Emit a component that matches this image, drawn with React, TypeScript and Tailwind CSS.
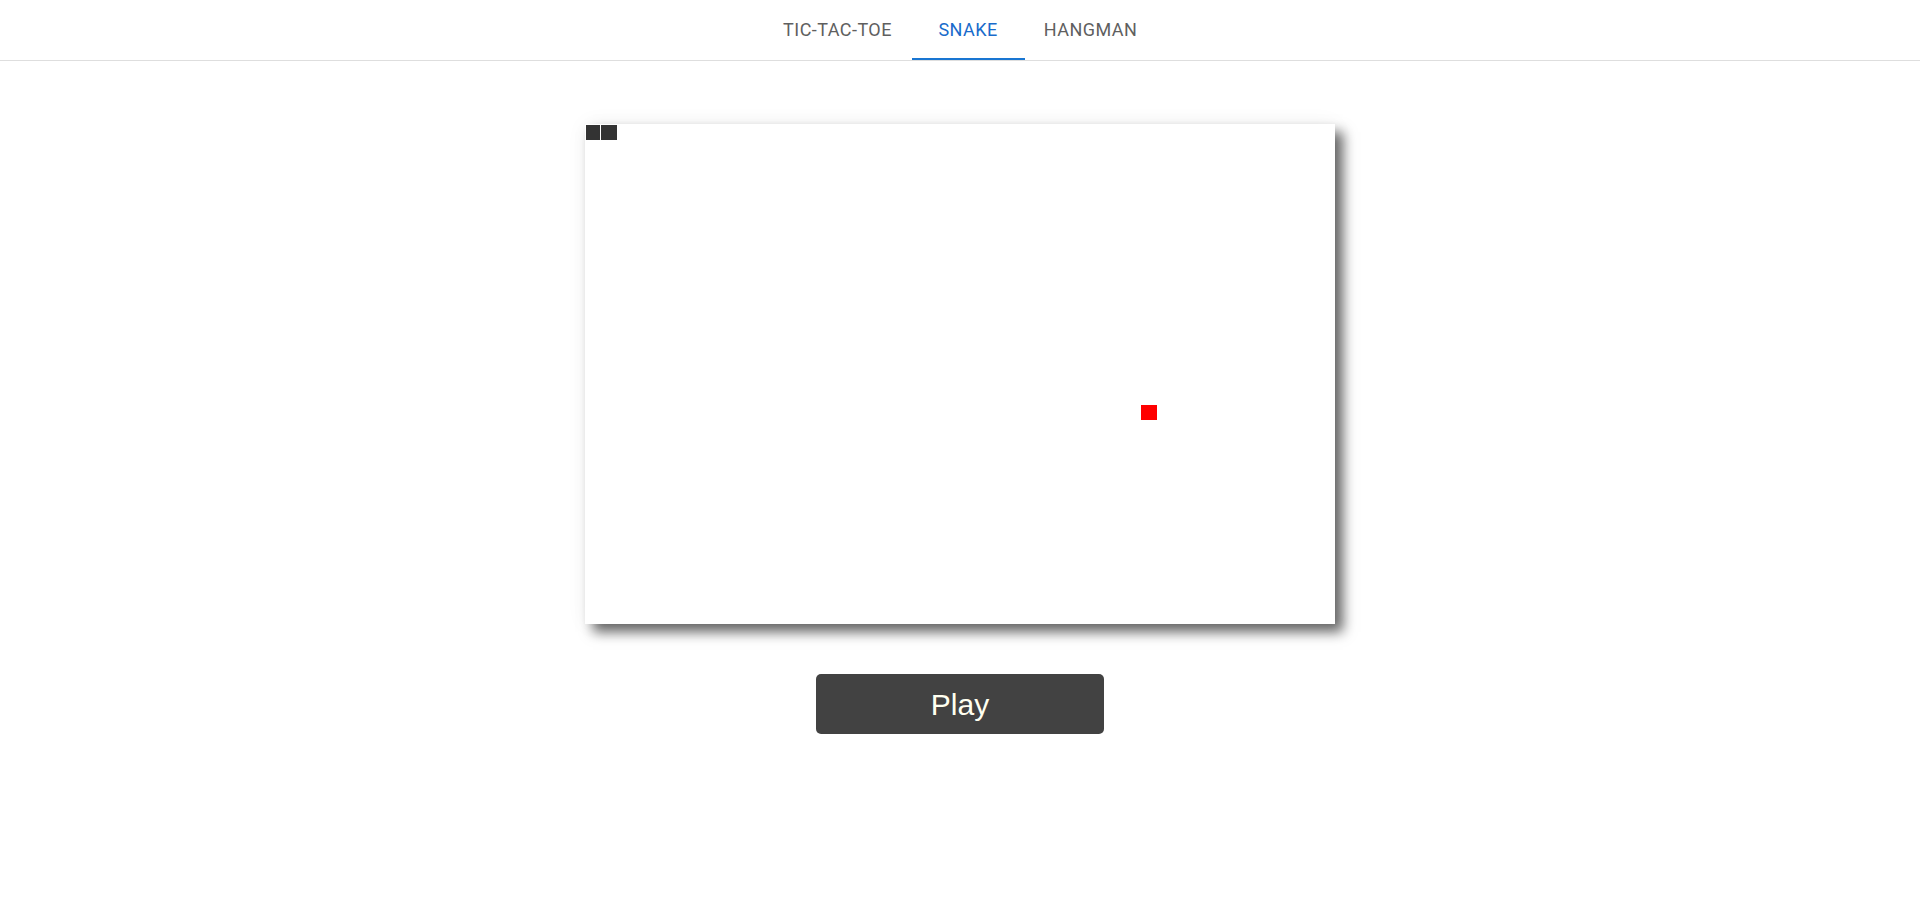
import { useState } from "react";

const games = [
  { name: "TIC-TAC-TOE", width: "min-w-[148px]" },
  { name: "SNAKE", width: "min-w-[113px]" },
  { name: "HANGMAN", width: "min-w-[132px]" },
];

function GameTabs() {
  const [active, setActive] = useState("SNAKE");
  return (
    <nav
      role="tablist"
      className="flex h-[61px] justify-center border-b border-[#dedede] font-['Roboto',sans-serif]"
    >
      {games.map(({ name, width }) => (
        <button
          key={name}
          type="button"
          role="tab"
          aria-selected={active === name}
          onClick={() => setActive(name)}
          className={`${width} border-b-2 pt-[2px] text-center text-[18px] leading-6 font-normal tracking-wide ${
            active === name
              ? "border-[#1976d2] text-[#196bcb]"
              : "border-transparent text-[#5f5f5f]"
          }`}
        >
          {name}
        </button>
      ))}
    </nav>
  );
}

function SnakeBoard() {
  return (
    <section
      aria-label="Snake board"
      className="relative aspect-[3/2] w-full max-w-[750px] bg-white shadow-[8px_8px_12px_rgba(0,0,0,0.6),0_0_20px_rgba(0,0,0,0.05)]"
    >
      <div className="absolute top-px left-px h-[15px] w-[14px] bg-[#333333]" />
      <div className="absolute top-px left-[16px] h-[15px] w-[16px] bg-[#333333]" />
      <div className="absolute top-[281px] left-[556px] h-[15px] w-[16px] bg-[#ff0000]" />
    </section>
  );
}

export default function App() {
  return (
    <div className="min-h-screen bg-white">
      <GameTabs />
      <main className="flex flex-col items-center gap-[50px] px-4 pt-[63px] pb-12">
        <SnakeBoard />
        <button
          type="button"
          className="h-[60px] w-72 rounded-[5px] bg-[#424242] pt-[2px] font-['Liberation_Sans',Arial,sans-serif] text-[30px] leading-9 text-[#fffff0]"
        >
          Play
        </button>
      </main>
    </div>
  );
}
